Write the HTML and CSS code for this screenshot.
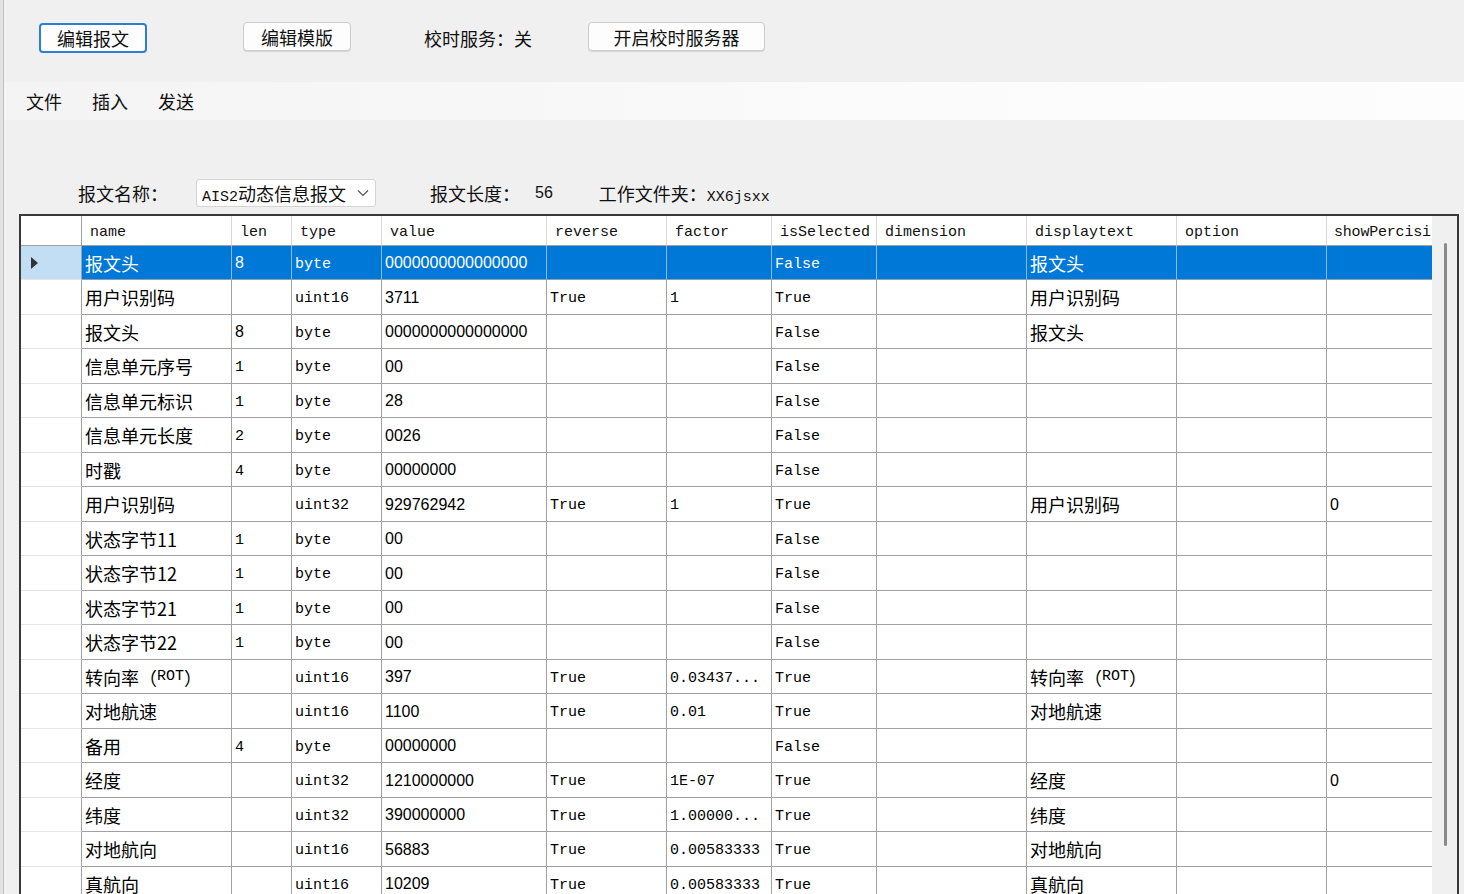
FILE: index.html
```html
<!DOCTYPE html>
<html lang="zh-CN">
<head>
<meta charset="utf-8">
<title>报文编辑</title>
<link rel="stylesheet" href="styles.css">
</head>
<body>
<div class="app">
  <div class="edge"></div>
  <div class="main">
    <div class="toolbar">
      <button class="btn btn-focus">编辑报文</button>
      <button class="btn btn-tpl">编辑模版</button>
      <span class="status">校时服务：关</span>
      <button class="btn btn-srv">开启校时服务器</button>
    </div>
    <div class="menubar">
      <span class="menu-item">文件</span>
      <span class="menu-item">插入</span>
      <span class="menu-item">发送</span>
    </div>
    <div class="info">
      <span class="lbl-name">报文名称：</span>
      <div class="combo">
        <span class="combo-text"><span class="m">AIS2</span>动态信息报文</span>
        <svg class="chev" width="12" height="8" viewBox="0 0 12 8"><polyline points="1,1.5 6,6.5 11,1.5" fill="none" stroke="#555" stroke-width="1.2"/></svg>
      </div>
      <span class="lbl-len">报文长度：</span>
      <span class="len-val">56</span>
      <span class="lbl-dir">工作文件夹：<span class="m">XX6jsxx</span></span>
    </div>
    <div class="grid">
      <div class="table">
        <div class="hrow">
          <div class="hc"></div>
          <div class="hc">name</div>
          <div class="hc">len</div>
          <div class="hc">type</div>
          <div class="hc">value</div>
          <div class="hc">reverse</div>
          <div class="hc">factor</div>
          <div class="hc">isSelected</div>
          <div class="hc">dimension</div>
          <div class="hc">displaytext</div>
          <div class="hc">option</div>
          <div class="hc last">showPercisi</div>
        </div>
        <div class="rows">
          <div class="row sel">
            <div class="rh"><span class="tri"></span></div>
            <div class="c">报文头</div><div class="c n">8</div><div class="c m">byte</div><div class="c n">0000000000000000</div><div class="c m"></div><div class="c m"></div><div class="c m">False</div><div class="c"></div><div class="c">报文头</div><div class="c"></div><div class="c last"></div>
          </div>
          <div class="row">
            <div class="rh"></div>
            <div class="c">用户识别码</div><div class="c m"></div><div class="c m">uint16</div><div class="c n">3711</div><div class="c m">True</div><div class="c m">1</div><div class="c m">True</div><div class="c"></div><div class="c">用户识别码</div><div class="c"></div><div class="c last"></div>
          </div>
          <div class="row">
            <div class="rh"></div>
            <div class="c">报文头</div><div class="c n">8</div><div class="c m">byte</div><div class="c n">0000000000000000</div><div class="c m"></div><div class="c m"></div><div class="c m">False</div><div class="c"></div><div class="c">报文头</div><div class="c"></div><div class="c last"></div>
          </div>
          <div class="row">
            <div class="rh"></div>
            <div class="c">信息单元序号</div><div class="c m">1</div><div class="c m">byte</div><div class="c n">00</div><div class="c m"></div><div class="c m"></div><div class="c m">False</div><div class="c"></div><div class="c"></div><div class="c"></div><div class="c last"></div>
          </div>
          <div class="row">
            <div class="rh"></div>
            <div class="c">信息单元标识</div><div class="c m">1</div><div class="c m">byte</div><div class="c n">28</div><div class="c m"></div><div class="c m"></div><div class="c m">False</div><div class="c"></div><div class="c"></div><div class="c"></div><div class="c last"></div>
          </div>
          <div class="row">
            <div class="rh"></div>
            <div class="c">信息单元长度</div><div class="c m">2</div><div class="c m">byte</div><div class="c n">0026</div><div class="c m"></div><div class="c m"></div><div class="c m">False</div><div class="c"></div><div class="c"></div><div class="c"></div><div class="c last"></div>
          </div>
          <div class="row">
            <div class="rh"></div>
            <div class="c">时戳</div><div class="c m">4</div><div class="c m">byte</div><div class="c n">00000000</div><div class="c m"></div><div class="c m"></div><div class="c m">False</div><div class="c"></div><div class="c"></div><div class="c"></div><div class="c last"></div>
          </div>
          <div class="row">
            <div class="rh"></div>
            <div class="c">用户识别码</div><div class="c m"></div><div class="c m">uint32</div><div class="c n">929762942</div><div class="c m">True</div><div class="c m">1</div><div class="c m">True</div><div class="c"></div><div class="c">用户识别码</div><div class="c"></div><div class="c n last">0</div>
          </div>
          <div class="row">
            <div class="rh"></div>
            <div class="c">状态字节11</div><div class="c m">1</div><div class="c m">byte</div><div class="c n">00</div><div class="c m"></div><div class="c m"></div><div class="c m">False</div><div class="c"></div><div class="c"></div><div class="c"></div><div class="c last"></div>
          </div>
          <div class="row">
            <div class="rh"></div>
            <div class="c">状态字节12</div><div class="c m">1</div><div class="c m">byte</div><div class="c n">00</div><div class="c m"></div><div class="c m"></div><div class="c m">False</div><div class="c"></div><div class="c"></div><div class="c"></div><div class="c last"></div>
          </div>
          <div class="row">
            <div class="rh"></div>
            <div class="c">状态字节21</div><div class="c m">1</div><div class="c m">byte</div><div class="c n">00</div><div class="c m"></div><div class="c m"></div><div class="c m">False</div><div class="c"></div><div class="c"></div><div class="c"></div><div class="c last"></div>
          </div>
          <div class="row">
            <div class="rh"></div>
            <div class="c">状态字节22</div><div class="c m">1</div><div class="c m">byte</div><div class="c n">00</div><div class="c m"></div><div class="c m"></div><div class="c m">False</div><div class="c"></div><div class="c"></div><div class="c"></div><div class="c last"></div>
          </div>
          <div class="row">
            <div class="rh"></div>
            <div class="c">转向率（<span class="m">ROT</span>）</div><div class="c m"></div><div class="c m">uint16</div><div class="c n">397</div><div class="c m">True</div><div class="c m">0.03437...</div><div class="c m">True</div><div class="c"></div><div class="c">转向率（<span class="m">ROT</span>）</div><div class="c"></div><div class="c last"></div>
          </div>
          <div class="row">
            <div class="rh"></div>
            <div class="c">对地航速</div><div class="c m"></div><div class="c m">uint16</div><div class="c n">1100</div><div class="c m">True</div><div class="c m">0.01</div><div class="c m">True</div><div class="c"></div><div class="c">对地航速</div><div class="c"></div><div class="c last"></div>
          </div>
          <div class="row">
            <div class="rh"></div>
            <div class="c">备用</div><div class="c m">4</div><div class="c m">byte</div><div class="c n">00000000</div><div class="c m"></div><div class="c m"></div><div class="c m">False</div><div class="c"></div><div class="c"></div><div class="c"></div><div class="c last"></div>
          </div>
          <div class="row">
            <div class="rh"></div>
            <div class="c">经度</div><div class="c m"></div><div class="c m">uint32</div><div class="c n">1210000000</div><div class="c m">True</div><div class="c m">1E-07</div><div class="c m">True</div><div class="c"></div><div class="c">经度</div><div class="c"></div><div class="c n last">0</div>
          </div>
          <div class="row">
            <div class="rh"></div>
            <div class="c">纬度</div><div class="c m"></div><div class="c m">uint32</div><div class="c n">390000000</div><div class="c m">True</div><div class="c m">1.00000...</div><div class="c m">True</div><div class="c"></div><div class="c">纬度</div><div class="c"></div><div class="c last"></div>
          </div>
          <div class="row">
            <div class="rh"></div>
            <div class="c">对地航向</div><div class="c m"></div><div class="c m">uint16</div><div class="c n">56883</div><div class="c m">True</div><div class="c m">0.00583333</div><div class="c m">True</div><div class="c"></div><div class="c">对地航向</div><div class="c"></div><div class="c last"></div>
          </div>
          <div class="row">
            <div class="rh"></div>
            <div class="c">真航向</div><div class="c m"></div><div class="c m">uint16</div><div class="c n">10209</div><div class="c m">True</div><div class="c m">0.00583333</div><div class="c m">True</div><div class="c"></div><div class="c">真航向</div><div class="c"></div><div class="c last"></div>
          </div>
        </div>
      </div>
      <div class="vscroll"><div class="thumb"></div></div>
    </div>
  </div>
</div>
</body>
</html>
```

FILE: styles.css
```css
* { box-sizing: border-box; }

body {
  margin: 0;
  width: 1464px;
  height: 894px;
  overflow: hidden;
  background: #f0f0f0;
  font-family: "Noto Sans CJK SC", "Noto Sans", sans-serif;
  font-size: 18px;
  color: #111;
}

.m {
  font-family: "Liberation Mono", "DejaVu Sans Mono", monospace;
  font-size: 15px;
}

.n {
  font-family: "Liberation Sans", Arial, sans-serif;
  font-size: 16px;
}

.app {
  display: flex;
  height: 894px;
}

.edge {
  flex: none;
  width: 4px;
  background: #e2e2e2;
  border-right: 1px solid #c2c2c2;
}

.main {
  flex: 1;
  min-width: 0;
  display: flex;
  flex-direction: column;
}

/* toolbar */
.toolbar {
  display: flex;
  align-items: flex-start;
  padding: 22px 0 0 35px;
  height: 53px;
  flex: none;
}

.btn {
  font-family: "Noto Sans CJK SC", sans-serif;
  font-size: 18px;
  color: #111;
  height: 29px;
  padding: 0;
  border: 1px solid #cdcdcd;
  border-radius: 4px;
  background: #fdfdfd;
  box-shadow: 0 1px 0 #d6d6d6;
  line-height: 26px;
  text-align: center;
}

.btn-focus {
  width: 108px;
  height: 30px;
  margin-top: 1px;
  border: 2px solid #2a7fd4;
  box-shadow: none;
}

.btn-tpl {
  width: 108px;
  margin-left: 96px;
}

.status {
  margin-left: 73px;
  line-height: 32px;
}

.btn-srv {
  width: 177px;
  margin-left: 56px;
}

/* menu */
.menubar {
  flex: none;
  margin-top: 29px;
  height: 38px;
  display: flex;
  align-items: center;
  gap: 30px;
  padding-left: 22px;
  background: linear-gradient(to right, #f4f4f4 0%, #f8f8f8 40%, #fbfbfb 60%, #fdfdfd 100%);
}

.menu-item {
  line-height: 38px;
}

/* info line */
.info {
  flex: none;
  margin-top: 59px;
  height: 28px;
  display: flex;
  align-items: center;
  padding-left: 74px;
}

.lbl-name {
  width: 118px;
  flex: none;
}

.combo {
  width: 180px;
  height: 28px;
  flex: none;
  display: flex;
  align-items: center;
  justify-content: space-between;
  padding: 0 6px 0 5px;
  background: #fff;
  border: 1px solid #d4d4d4;
  border-radius: 3px;
}

.combo-text {
  white-space: nowrap;
}

.chev {
  flex: none;
}

.lbl-len {
  margin-left: 54px;
}

.len-val {
  margin-left: 15px;
  font-family: "Liberation Sans", Arial, sans-serif;
  font-size: 16px;
}

.lbl-dir {
  margin-left: 46px;
}

/* grid */
.grid {
  flex: 1;
  margin-top: 7px;
  margin-left: 15px;
  width: 1440px;
  display: flex;
  border: 2px solid #3a3a3a;
  border-bottom: none;
  background: #f0f0f0;
  min-height: 0;
}

.table {
  width: 1411px;
  flex: none;
}

.hrow,
.row {
  display: grid;
  grid-template-columns: 61px 150px 60px 90px 165px 120px 105px 105px 150px 150px 150px 105px;
}

.hrow {
  height: 30px;
  background: #fff;
}

.hc {
  font-family: "Liberation Mono", "DejaVu Sans Mono", monospace;
  font-size: 15px;
  line-height: 29px;
  padding: 2px 0 0 8px;
  white-space: nowrap;
  overflow: hidden;
  border-right: 1px solid #d8d8d8;
  border-bottom: 1px solid #a0a0a0;
}

.hc:first-child {
  border-right-color: #a0a0a0;
}

.hc.last {
  padding-left: 7px;
  letter-spacing: -0.2px;
}

.hc.last,
.c.last {
  border-right: none;
}

.row {
  height: 34px;
}

.row:nth-child(even) {
  height: 35px;
}

.rh {
  background: #fff;
  border-right: 1px solid #a0a0a0;
  border-bottom: 1px solid #e4e4e4;
  display: flex;
  align-items: center;
  padding-left: 10px;
}

.c {
  background: #fff;
  color: #000;
  border-right: 1px solid #a0a0a0;
  border-bottom: 1px solid #a0a0a0;
  padding-left: 3px;
  display: flex;
  align-items: center;
  white-space: nowrap;
  overflow: hidden;
}

.c.m {
  padding-top: 3px;
}

.c.n {
  padding-top: 1px;
}

.sel .rh {
  background: #c2def5;
}

.sel .c {
  background: #0078d7;
  color: #fff;
  border-right-color: #8fb8dc;
  border-bottom-color: #8a9fb4;
}

.tri {
  width: 0;
  height: 0;
  border-left: 7px solid #333;
  border-top: 6px solid transparent;
  border-bottom: 6px solid transparent;
}

.vscroll {
  flex: 1;
  padding: 27px 0 0 12px;
  background: #f0f0f0;
}

.thumb {
  width: 3px;
  height: 603px;
  background: #8a8a8a;
  border-radius: 2px;
}
```
